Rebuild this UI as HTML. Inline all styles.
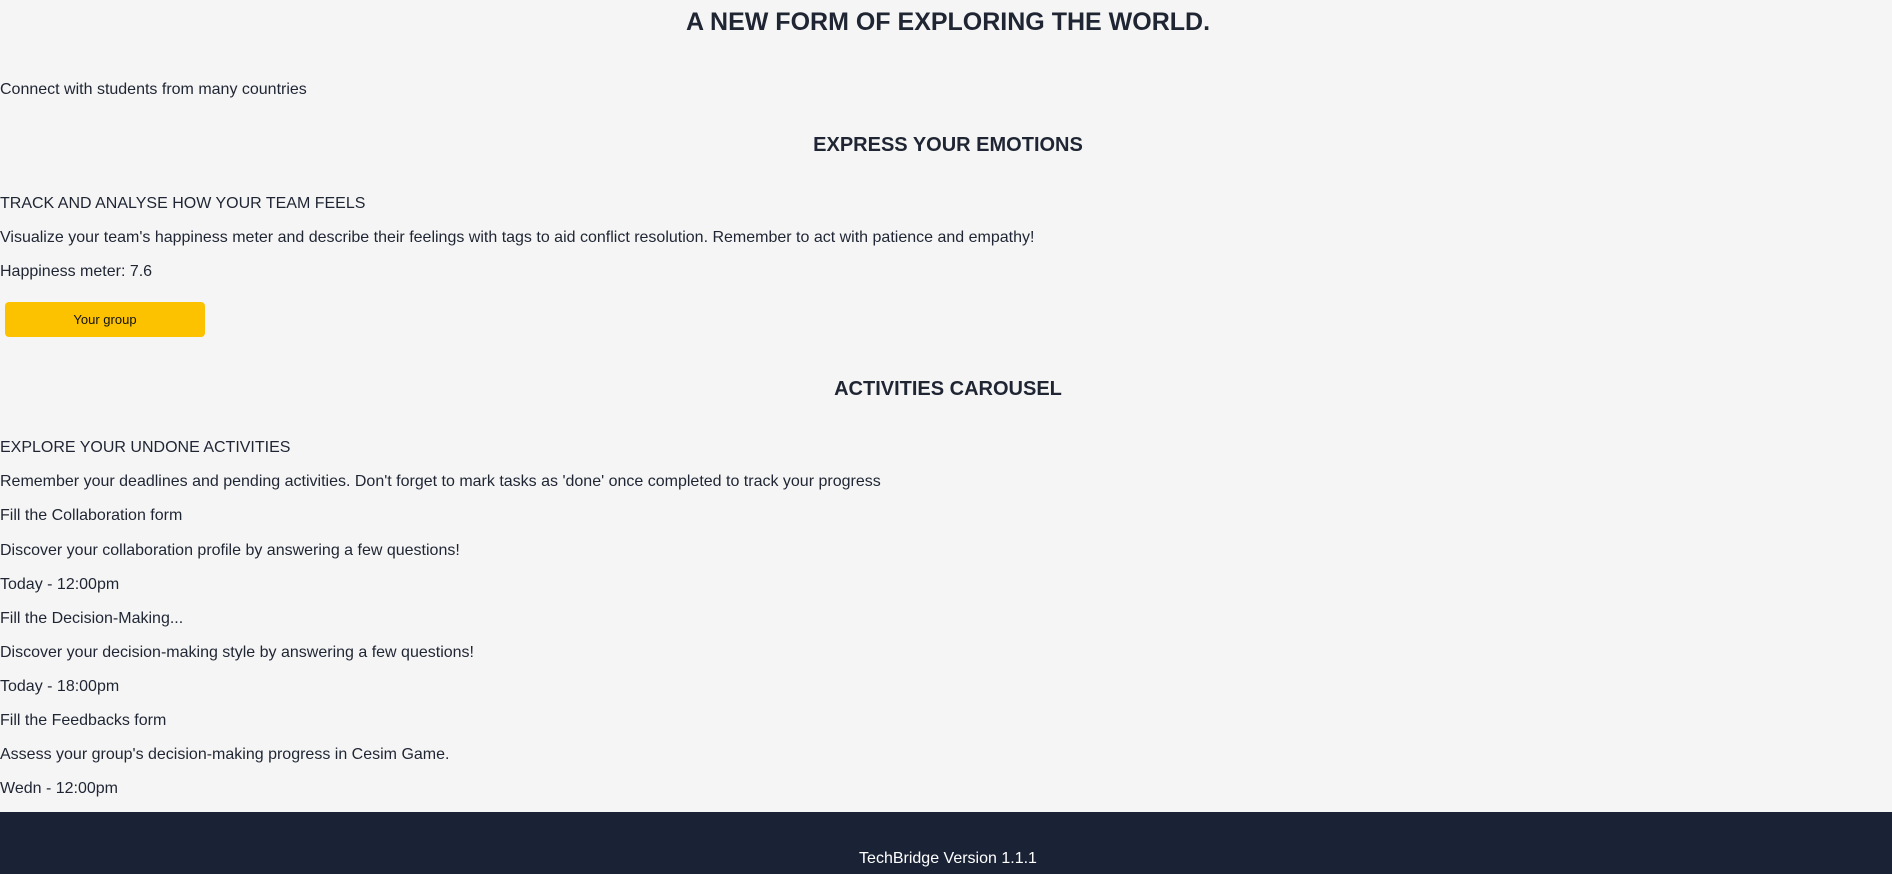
<!DOCTYPE html>
<html><head><meta charset="utf-8"><style>
html,body{margin:0;padding:0;}
body{width:1892px;height:874px;background:#f5f5f5;position:relative;overflow:hidden;font-family:"Liberation Sans",Arial,sans-serif;color:#1f2533;}
.t{position:absolute;left:0;font-size:16px;line-height:20px;white-space:nowrap;}
.h{position:absolute;left:2px;width:1892px;text-align:center;font-weight:bold;white-space:nowrap;}
.btn{position:absolute;left:5px;top:302px;width:200px;height:35px;background:#fcc200;border-radius:4px;font-size:13px;line-height:35px;text-align:center;color:#111;}
.foot{position:absolute;left:0;top:812px;width:1892px;height:62px;background:#1a2336;color:#fff;font-size:16px;}
</style></head><body>
<div class="h" style="top:8px;font-size:25px;line-height:28px;">A NEW FORM OF EXPLORING THE WORLD.</div>
<div class="t" style="top:80px">Connect with students from many countries</div>
<div class="h" style="top:134px;font-size:20px;line-height:22px;">EXPRESS YOUR EMOTIONS</div>
<div class="t" style="top:194px">TRACK AND ANALYSE HOW YOUR TEAM FEELS</div>
<div class="t" style="top:228px">Visualize your team's happiness meter and describe their feelings with tags to aid conflict resolution. Remember to act with patience and empathy!</div>
<div class="t" style="top:262px">Happiness meter: 7.6</div>
<div class="btn">Your group</div>
<div class="h" style="top:378px;font-size:20px;line-height:22px;">ACTIVITIES CAROUSEL</div>
<div class="t" style="top:438px">EXPLORE YOUR UNDONE ACTIVITIES</div>
<div class="t" style="top:472px">Remember your deadlines and pending activities. Don't forget to mark tasks as 'done' once completed to track your progress</div>
<div class="t" style="top:506px">Fill the Collaboration form</div>
<div class="t" style="top:541px">Discover your collaboration profile by answering a few questions!</div>
<div class="t" style="top:575px">Today - 12:00pm</div>
<div class="t" style="top:609px">Fill the Decision-Making...</div>
<div class="t" style="top:643px">Discover your decision-making style by answering a few questions!</div>
<div class="t" style="top:677px">Today - 18:00pm</div>
<div class="t" style="top:711px">Fill the Feedbacks form</div>
<div class="t" style="top:745px">Assess your group's decision-making progress in Cesim Game.</div>
<div class="t" style="top:779px">Wedn - 12:00pm</div>
<div class="foot"><div style="position:absolute;left:2px;width:1892px;top:37px;line-height:20px;text-align:center;">TechBridge Version 1.1.1</div></div>
</body></html>
